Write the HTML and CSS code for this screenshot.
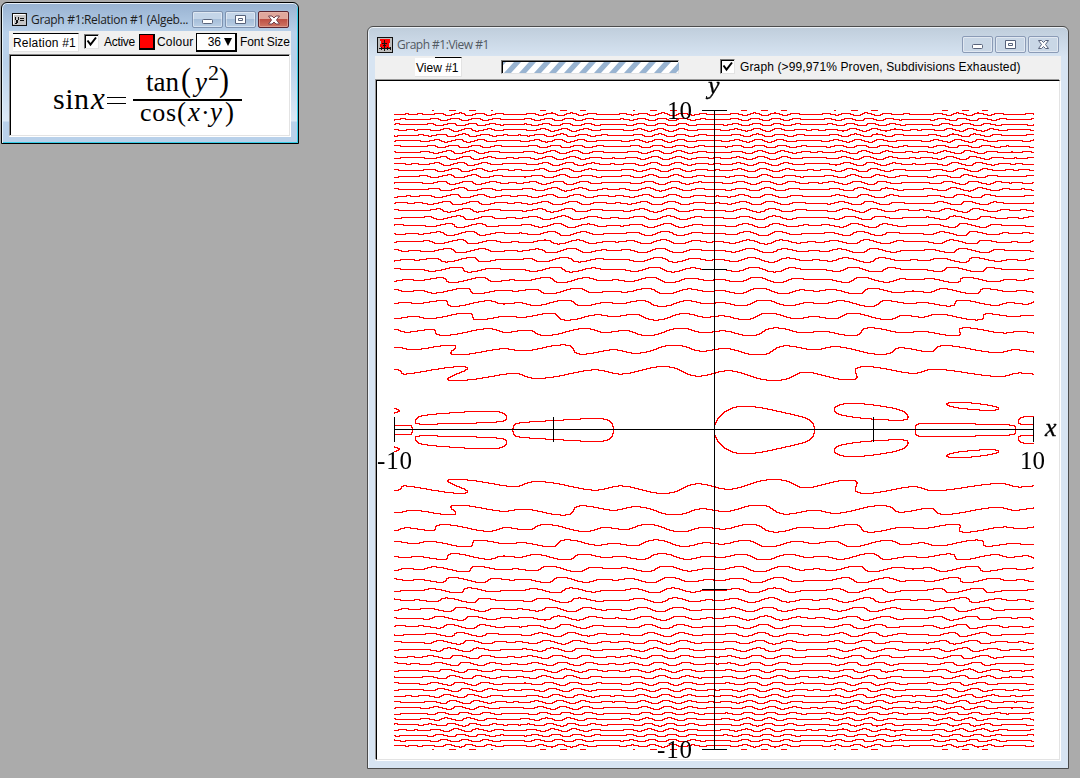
FILE: index.html
```html
<!DOCTYPE html>
<html lang="en">
<head>
<meta charset="utf-8">
<title>Graph #1</title>
<link rel="stylesheet" href="styles.css">
</head>
<body>
<main class="desktop">
  <section class="window relation">
    <header class="titlebar">
      <svg class="app-icon" width="15" height="13" viewBox="0 0 15 13" shape-rendering="crispEdges"><rect x=".5" y=".5" width="14" height="12" rx="1" fill="#c6c6c6" stroke="#111"/><path d="M1.5 11V1.5H13" fill="none" stroke="#fff"/><path d="M3.500 4v2l1 2h1l1-2V4M5.500 7v2l-1 1H3M8 5.500h4M8 7.500h4" fill="none" stroke="#111"/></svg>
      <h1 class="title">Graph #1:Relation #1 (Algeb...</h1>
      <div class="controls">
        <button class="control"><svg width="13" height="10"><rect x="1.500" y="4.500" width="10" height="4" rx="1" fill="#fff" stroke="#58637b"/></svg></button>
        <button class="control"><svg width="13" height="10"><path d="M1.500 .5h10v8h-10zM4.500 3.500h4v2h-4z" fill="#fff" stroke="#58637b"/></svg></button>
        <button class="control close"><svg width="14" height="10"><path d="M1.500 1h3.500l2 2 2-2h3.500L9.500 5l3 4H9L7 7 5 9H1.500l3-4z" fill="#fff" stroke="#71404a"/></svg></button>
      </div>
    </header>
    <div class="client">
      <div class="toolbar">
        <span class="name">Relation #1</span>
        <span class="check"><svg width="11" height="11"><path d="M1.500 4.500l3 4L10 1.500" fill="none" stroke="#000" stroke-width="2"/></svg></span>
        <span class="label active">Active</span>
        <span class="swatch"></span>
        <span class="label colour">Colour</span>
        <span class="select"><span>36</span><svg width="8" height="9"><path d="M0 0h8L4 8z"/></svg></span>
        <span class="label size">Font Size</span>
      </div>
      <div class="editor">
        <svg class="formula" width="278" height="77" viewBox="11 56 278 77">
          <text x="53" y="109" font-size="30" textLength="36">sin</text>
          <text x="91" y="109" font-size="31" class="var">x</text>
          <path d="M107 97.500h19M107 103.500h19" stroke="#000"/>
          <path d="M133 100h109" stroke="#000" stroke-width="2"/>
          <text x="146" y="91" font-size="27" textLength="33">tan</text>
          <text x="181" y="91" font-size="34" textLength="10" lengthAdjust="spacingAndGlyphs">(</text>
          <text x="195" y="91" font-size="27" class="var">y</text>
          <text x="208" y="80" font-size="22">2</text>
          <text x="219" y="91" font-size="34" textLength="10" lengthAdjust="spacingAndGlyphs">)</text>
          <text x="140" y="121" font-size="26" textLength="36">cos</text>
          <text x="177" y="121" font-size="27">(</text>
          <text x="188" y="121" font-size="27" class="var">x</text>
          <text x="201" y="121" font-size="26">·</text>
          <text x="210" y="121" font-size="27" class="var">y</text>
          <text x="225" y="121" font-size="27">)</text>
        </svg>
      </div>
    </div>
  </section>

  <section class="window view">
    <header class="titlebar">
      <svg class="app-icon" width="16" height="16" viewBox="0 0 16 16" shape-rendering="crispEdges"><rect x=".5" y=".5" width="15" height="15" rx="1" fill="#bdbdbd" stroke="#111"/><path d="M3 2h10v3l-1 3 1 4H4l-1-4 1-2z" fill="#f00"/><path d="M7.500 3v11M2 11.500h12M5 6.500h5M4.500 10v3M10.500 10v3M13.500 10v3M6 8.500h3" stroke="#111"/></svg>
      <h1 class="title">Graph #1:View #1</h1>
      <div class="controls">
        <button class="control"><svg width="13" height="10"><rect x="1.500" y="4.500" width="10" height="4" rx="1" fill="#fff" stroke="#58637b"/></svg></button>
        <button class="control"><svg width="13" height="10"><path d="M1.500 .5h10v8h-10zM4.500 3.500h4v2h-4z" fill="#fff" stroke="#58637b"/></svg></button>
        <button class="control"><svg width="13" height="10"><path d="M1.500 .5h3l2 2 2-2h3l-3 4 3 4h-3l-2-2-2 2h-3l3-4z" fill="#fff" stroke="#58637b"/></svg></button>
      </div>
    </header>
    <div class="client">
      <div class="toolbar">
        <span class="name">View #1</span>
        <span class="progress"><svg width="176" height="11"><defs><pattern id="stripes" width="15" height="11" patternUnits="userSpaceOnUse" x="1"><path d="M0 11L10 0h7L7 11zM-15 11L-5 0h7L-8 11z" fill="#99b4d1"/></pattern></defs><rect width="176" height="11" fill="url(#stripes)"/></svg></span>
        <span class="check"><svg width="11" height="11"><path d="M1.500 4.500l3 4L10 1.500" fill="none" stroke="#000" stroke-width="2"/></svg></span>
        <span class="label graph">Graph (&gt;99,971% Proven, Subdivisions Exhausted)</span>
      </div>
      <div class="plot">
        <canvas class="curve" id="curve" width="640" height="640"></canvas>
        <svg class="axes" width="682" height="677" viewBox="377 81 682 677">
          <path d="M394 429.500h640M714.500 110v640M394.500 417v25M553.500 417v25M873.500 417v25M1033.500 417v25M702 110.500h25M702 269.500h25M702 589.500h25M702 749.500h25" stroke="#000" shape-rendering="crispEdges"/>
          <text x="667" y="119" textLength="25">10</text>
          <text x="657" y="758" textLength="35">-10</text>
          <text x="377" y="469" textLength="35">-10</text>
          <text x="1020" y="469" textLength="25">10</text>
          <text x="708" y="94" class="var">y</text>
          <text x="1045" y="436" class="var">x</text>
        </svg>
      </div>
    </div>
  </section>
</main>
<script src="plot.js"></script>
</body>
</html>
```

FILE: styles.css
```css
* { box-sizing: border-box; }
body { margin: 0; }
.desktop { position: relative; width: 1080px; height: 778px; background: #ababab; overflow: hidden; font-family: "Liberation Sans", Arial, sans-serif; }
.window { position: absolute; display: flex; flex-direction: column; }
.relation { left: 1px; top: 2px; width: 298px; height: 142px; padding: 0 7px 6px; border: 1px solid #000; border-radius: 6px 6px 0 0; background: linear-gradient(#98b2d1, #b9d1ea 30px, #b9d1ea 60px, #dce9f6 118px, #b9d1ea 119px); box-shadow: inset 0 1px #e7f0f9, inset 1px 0 #e3f2fb, inset -1px -1px #35cde8; }
.view { left: 367px; top: 26px; width: 702px; height: 743px; padding: 0 7px 7px; border: 1px solid #4b4b4b; border-radius: 6px 6px 0 0; background: linear-gradient(#bfcddb, #d7e4f2 30px); box-shadow: inset 0 1px #edf2f7, inset 1px 0 #eef3f9; }
.titlebar { display: flex; align-items: center; flex: none; }
.relation .titlebar { height: 28px; padding: 5px 2px 0 3px; }
.view .titlebar { height: 29px; padding: 6px 2px 0 2px; }
.app-icon { flex: none; }
.title { margin: 0 auto 0 4px; font: 12px/16px "Open Sans", sans-serif; letter-spacing: -.32px; white-space: nowrap; color: #1c1c1c; }
.view .title { color: #535a63; letter-spacing: -.5px; }
.controls { display: flex; gap: 2px; }
.control { display: flex; align-items: center; justify-content: center; width: 31px; height: 17px; padding: 0; border: 1px solid #7f93b0; border-radius: 2px; background: linear-gradient(#c4d5e8 48%, #a6bed9 50%, #bacfe5); box-shadow: inset 0 0 0 1px #ffffff70; }
.control svg { flex: none; }
.view .control { background: #c9d7e6; border-color: #8b9bb6; }
.relation .close { border-color: #5b2631; background: linear-gradient(#e0a79c 45%, #bd5044 50%, #cf7665); box-shadow: inset 0 0 0 1px #edc1b580; }
.client { flex: 1; display: flex; flex-direction: column; background: #f0f0f0; }
.toolbar { display: flex; align-items: flex-start; flex: none; font-size: 12px; line-height: 14px; color: #000; white-space: nowrap; }
.relation .toolbar { height: 23px; padding: 2px 0 0 4px; }
.view .toolbar { height: 24px; padding: 1px 0 0 40px; }
.name { background: #fff; border-top: 1px solid #000; border-right: 1px solid #e3e3e3; border-bottom: 1px solid #e3e3e3; }
.relation .name { width: 66px; height: 19px; padding-top: 2px; letter-spacing: .2px; }
.view .name { width: 47px; height: 20px; padding: 3px 0 0 1px; border-top-color: transparent; background: linear-gradient(90deg, #f0f0f0 20px, #000 20px) 0 0 / 100% 1px no-repeat border-box, #fff; }
.check { display: flex; width: 15px; height: 15px; padding: 1px; border: 1px solid; border-color: #777 #e3e3e3 #e3e3e3 #777; background: #fff; box-shadow: inset 1px 1px #000; }
.relation .check { margin: 1px 0 0 5px; }
.view .check { margin: 2px 0 0 41px; }
.label { padding-top: 2px; }
.active { width: 34px; margin-left: 5px; letter-spacing: -.3px; }
.swatch { width: 16px; height: 16px; margin: 1px 0 0 1px; border: 1px solid #000; border-right-width: 2px; border-bottom-width: 2px; background: #f00; }
.colour { width: 39px; margin-left: 2px; letter-spacing: .2px; }
.select { display: flex; align-items: center; justify-content: flex-end; gap: 3px; width: 41px; height: 19px; padding-right: 3px; border: 1px solid #000; border-right-width: 2px; border-bottom-width: 2px; background: #fff; }
.size { margin-left: 3px; letter-spacing: -.1px; }
.editor { flex: 1; margin: 0 1px 1px 0; padding: 1px 0 0 1px; background: #fff; border: 1px solid; border-color: #888 #e3e3e3 #e3e3e3 #888; box-shadow: inset 1px 1px #000, 1px 1px #fff; overflow: hidden; }
.formula, .axes, .curve { display: block; }
.formula text, .axes text { font-family: "Liberation Serif", "Times New Roman", serif; fill: #000; }
.formula .var, .axes .var { font-style: italic; }
.progress { width: 178px; height: 14px; margin: 3px 0 0 39px; padding: 1px 0 0 1px; border: 1px solid; border-color: #777 #e3e3e3 #e3e3e3 #777; background: #fff; box-shadow: inset 1px 1px #000; }
.progress svg { display: block; }
.graph { margin-left: 5px; letter-spacing: .13px; padding-top: 3px; }
.plot { display: grid; flex: 1; margin: 0 1px 1px; background: #fff; border: 1px solid; border-color: #000 #e3e3e3 #e3e3e3 #000; box-shadow: -1px -1px #999, 1px 1px #fff; overflow: hidden; }
.curve { grid-area: 1 / 1; margin: 29px 0 0 17px; }
.axes { grid-area: 1 / 1; }
.axes text { font-size: 25px; }
.axes .var { font-size: 26px; stroke: #000; stroke-width: .3px; }
```

FILE: plot.js
```javascript
// Plots sin x = tan(y^2) / cos(x*y) on [-10, 10] x [-10, 10].
const ctx = document.getElementById('curve').getContext('2d');
const N = 640;
const step = 20 / N;
const f = (x, y) => Math.sin(x) * Math.cos(x * y) * Math.cos(y * y) - Math.sin(y * y);

ctx.fillStyle = '#f00';
for (let j = 0; j < N / 2; j++) {
  const y = 10 - j * step;
  for (let i = 0; i < N; i++) {
    const x = -10 + i * step;
    // A pixel is lit when the relation changes sign between its corners.
    const a = f(x, y) > 0, b = f(x + step, y) > 0;
    const c = f(x, y - step) > 0, d = f(x + step, y - step) > 0;
    if (a !== b || a !== c || a !== d) {
      ctx.fillRect(i, j, 1, 1);
      ctx.fillRect(i, N - 1 - j, 1, 1);
    }
  }
}
```
